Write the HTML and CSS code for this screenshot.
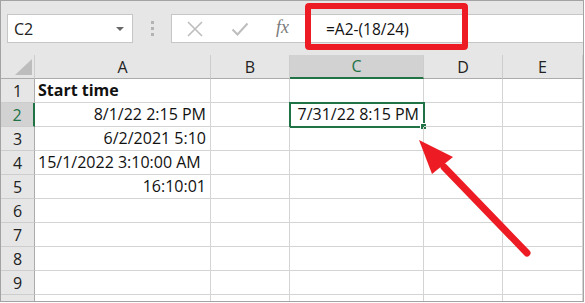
FILE: index.html
```html
<!DOCTYPE html>
<html lang="en">
<head>
  <meta charset="UTF-8" />
  <meta name="viewport" content="width=device-width, initial-scale=1" />
  <title>Sheet</title>
  <link rel="stylesheet" href="styles.css">
</head>
<body>

<div class="frame">
  <div class="toolbar">
    <div class="name-box">
      <span>C2</span>
      <span class="caret"></span>
    </div>
    <div class="grip"><i></i><i></i><i></i></div>
    <div class="formula-box">
      <svg class="tool" width="18" height="18" viewBox="0 0 18 18"><path d="M2 2 L16 16 M16 2 L2 16" stroke="#bdbdbd" stroke-width="1.6" fill="none"/></svg>
      <svg class="tool" width="18" height="18" viewBox="0 0 18 18"><path d="M1.5 9.5 L6.5 14.5 L16.5 3.5" stroke="#bdbdbd" stroke-width="2" fill="none"/></svg>
      <span class="fx">fx</span>
      <span class="formula">=A2-(18/24)</span>
    </div>
  </div>

  <div class="sheet">
    <div class="hd corner"><span class="tri"></span></div>
    <div class="hd col">A</div>
    <div class="hd col">B</div>
    <div class="hd col active">C</div>
    <div class="hd col">D</div>
    <div class="hd col">E</div>

    <div class="hd row">1</div>
    <div class="cell bold">Start time</div><div class="cell"></div><div class="cell"></div><div class="cell"></div><div class="cell"></div>

    <div class="hd row active">2</div>
    <div class="cell num">8/1/22 2:15 PM</div><div class="cell"></div>
    <div class="cell num selected">7/31/22 8:15 PM<span class="sel-box"><span class="handle"></span></span></div>
    <div class="cell"></div><div class="cell"></div>

    <div class="hd row">3</div>
    <div class="cell num">6/2/2021 5:10</div><div class="cell"></div><div class="cell"></div><div class="cell"></div><div class="cell"></div>

    <div class="hd row">4</div>
    <div class="cell">15/1/2022 3:10:00 AM</div><div class="cell"></div><div class="cell"></div><div class="cell"></div><div class="cell"></div>

    <div class="hd row">5</div>
    <div class="cell num">16:10:01</div><div class="cell"></div><div class="cell"></div><div class="cell"></div><div class="cell"></div>

    <div class="hd row">6</div>
    <div class="cell"></div><div class="cell"></div><div class="cell"></div><div class="cell"></div><div class="cell"></div>
    <div class="hd row">7</div>
    <div class="cell"></div><div class="cell"></div><div class="cell"></div><div class="cell"></div><div class="cell"></div>
    <div class="hd row">8</div>
    <div class="cell"></div><div class="cell"></div><div class="cell"></div><div class="cell"></div><div class="cell"></div>
    <div class="hd row">9</div>
    <div class="cell"></div><div class="cell"></div><div class="cell"></div><div class="cell"></div><div class="cell"></div>
    <!-- row 10 is cut by the window edge -->
    <div class="hd row"></div>
    <div class="cell"></div><div class="cell"></div><div class="cell"></div><div class="cell"></div><div class="cell"></div>
  </div>

  <!-- callout overlays -->
  <div class="highlight"></div>
  <svg class="arrow" width="585" height="303" viewBox="0 0 585 303">
    <line x1="527" y1="253" x2="444" y2="167" stroke="#ed1c24" stroke-width="7" stroke-linecap="round"/>
    <polygon points="419,140 453,157 432,174" fill="#ed1c24"/>
  </svg>
</div>

</body>
</html>
```

FILE: styles.css
```css
body {
  margin: 0;
  background: #ffffff;
  font-family: "Open Sans", "Liberation Sans", sans-serif;
  color: #111;
}
.frame {
  position: relative;
  width: 584px;
  height: 302px;
  box-sizing: border-box;
  border: 1px solid #a3a3a3;
  overflow: hidden;
}
.toolbar {
  height: 54px;
  background: #e6e6e6;
  display: flex;
  align-items: flex-start;
  padding-top: 13px;
  box-sizing: border-box;
}
.name-box {
  margin-left: 6px;
  width: 126px;
  height: 29px;
  box-sizing: border-box;
  background: #fff;
  border: 1px solid #c6c6c6;
  display: flex;
  align-items: center;
  justify-content: space-between;
  padding: 0 8px 0 6px;
  font-size: 16px;
  color: #222;
}
.caret {
  width: 0;
  height: 0;
  border-left: 4px solid transparent;
  border-right: 4px solid transparent;
  border-top: 4px solid #666;
}
.grip {
  width: 38px;
  height: 29px;
  display: flex;
  flex-direction: column;
  align-items: center;
  justify-content: center;
  gap: 3px;
}
.grip i {
  display: block;
  width: 3px;
  height: 3px;
  background: #b3b3b3;
}
.formula-box {
  flex: 1;
  height: 29px;
  box-sizing: border-box;
  background: #fff;
  border: 1px solid #c6c6c6;
  border-right: none;
  display: flex;
  align-items: center;
  padding-left: 14px;
}
.tool {
  margin-right: 27px;
}
.fx {
  font-family: "Liberation Serif", serif;
  font-style: italic;
  font-size: 18px;
  color: #7a7a7a;
  width: 20px;
  margin-top: -3px;
}
.formula {
  margin-left: 30px;
  font-size: 15.5px;
  color: #111;
}
.sheet {
  display: grid;
  grid-template-columns: 34px 176px 79px 134px 79px 1fr;
  grid-auto-rows: 24px;
}
.hd {
  background: #e6e6e6;
  box-sizing: border-box;
  display: flex;
  align-items: center;
  justify-content: center;
  font-size: 16px;
  color: #222;
}
.hd.col {
  border-right: 1px solid #cdcdcd;
  border-bottom: 1px solid #ababab;
}
.hd.row {
  border-right: 1px solid #ababab;
  border-bottom: 1px solid #cdcdcd;
}
.hd.corner {
  border-right: 1px solid #cdcdcd;
  border-bottom: 1px solid #ababab;
  position: relative;
}
.tri {
  position: absolute;
  right: 2px;
  bottom: 3px;
  width: 0;
  height: 0;
  border-left: 17px solid transparent;
  border-bottom: 16px solid #bdbdbd;
}
.hd.col.active {
  background: #d2d2d2;
  color: #217346;
  border-bottom: 2px solid #217346;
}
.hd.row.active {
  background: #d2d2d2;
  color: #217346;
  border-right: 2px solid #217346;
}
.cell {
  box-sizing: border-box;
  border-right: 1px solid #d4d4d4;
  border-bottom: 1px solid #d4d4d4;
  font-size: 16px;
  line-height: 23px;
  padding: 0 3px;
  white-space: nowrap;
  position: relative;
}
.cell.num {
  text-align: right;
  padding-right: 4px;
}
.cell.bold {
  font-weight: bold;
}
.sel-box {
  position: absolute;
  top: -1px;
  left: -1px;
  right: -2px;
  bottom: -2px;
  border: 2px solid #217346;
}
.handle {
  position: absolute;
  right: -4px;
  bottom: -4px;
  width: 5px;
  height: 5px;
  background: #217346;
  border: 1px solid #fff;
}
.highlight {
  position: absolute;
  left: 304px;
  top: 2px;
  width: 163px;
  height: 47px;
  box-sizing: border-box;
  border: 6px solid #ed1c24;
  border-radius: 4px;
}
.arrow {
  position: absolute;
  left: -1px;
  top: -1px;
}
```
